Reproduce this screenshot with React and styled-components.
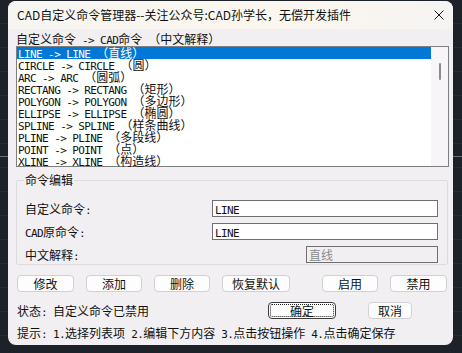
import styled, { createGlobalStyle } from "styled-components";

const GlobalStyle = createGlobalStyle`
  html, body {
    margin: 0;
    padding: 0;
    background: #1d2128;
  }
  body {
    font-family: "Noto Sans CJK SC", "Noto Sans", sans-serif;
    font-size: 12px;
    color: #111;
  }
`;

const Desktop = styled.div`
  width: 462px;
  height: 353px;
  padding: 1px 0 0 8px;
  box-sizing: border-box;
  overflow: hidden;
  background:
    linear-gradient(180deg, transparent 156px, #6b6f75 156px, #6b6f75 157px, transparent 157px),
    repeating-linear-gradient(180deg, transparent 0 23px, #262a31 23px 24px),
    #1d2128;
`;

const Dialog = styled.div`
  width: 445px;
  height: 344px;
  border-radius: 8px;
  background: #f2eff2;
  display: flex;
  flex-direction: column;
  overflow: hidden;
`;

const TitleBar = styled.div`
  height: 28px;
  display: flex;
  align-items: center;
  padding: 0 9px;
  background: linear-gradient(90deg, #f7f5f1 0%, #fbf7ee 60%, #f6f4f3 100%);
`;

const Title = styled.div`
  flex: 1;
  font-size: 12px;
  line-height: 28px;
  color: #111;
  white-space: nowrap;
`;

const CloseBtn = styled.div`
  width: 10px;
  height: 10px;
  display: flex;
`;

const Body = styled.div`
  flex: 1;
  display: flex;
  flex-direction: column;
  padding: 0 4px 0 8px;
`;

const Mono = styled.span`
  font-family: "DejaVu Sans Mono", "Liberation Mono", monospace;
  font-size: 11px;
  letter-spacing: -0.6px;
  white-space: pre;
`;

const Header = styled.div`
  height: 17px;
  padding-top: 3px;
  box-sizing: border-box;
  line-height: 14px;
  white-space: nowrap;
`;

const ListBox = styled.div`
  height: 121px;
  border: 1px solid #7f7f7f;
  background: #fff;
  box-sizing: border-box;
  display: flex;
`;

const Rows = styled.div`
  flex: 1;
  display: flex;
  flex-direction: column;
`;

const Row = styled.div`
  height: 12px;
  line-height: 12px;
  padding-left: 1px;
  white-space: nowrap;
  background: ${(p) => (p.$selected ? "#0078d7" : "transparent")};
  color: ${(p) => (p.$selected ? "#fff" : "#111")};
`;

const ScrollBar = styled.div`
  width: 17px;
  background: #f7f5f7;
  display: flex;
  justify-content: center;
  padding-top: 16px;
  box-sizing: border-box;
`;

const Thumb = styled.div`
  width: 2px;
  height: 17px;
  border-radius: 1px;
  background: #8a8a8a;
`;

const Group = styled.fieldset`
  margin: 6px 1px 0 0;
  padding: 13px 9px 1px 8px;
  border: 1px solid #dedbde;
  border-radius: 2px;
  display: flex;
  flex-direction: column;
  gap: 6px;
`;

const Legend = styled.legend`
  padding: 0 1px;
  margin-left: -1px;
  font-size: 12px;
  line-height: 14px;
`;

const Field = styled.div`
  height: 17px;
  display: flex;
  align-items: center;
`;

const Label = styled.div`
  flex: 1;
  white-space: nowrap;
`;

const Input = styled.div`
  width: ${(p) => p.$width}px;
  height: 17px;
  box-sizing: border-box;
  border: 1px solid #6f6f6f;
  background: ${(p) => (p.$disabled ? "transparent" : "#fff")};
  color: ${(p) => (p.$disabled ? "#8a8a8a" : "#111")};
  padding-left: 2px;
  line-height: 15px;
  white-space: nowrap;
`;

const ButtonRow = styled.div`
  margin-top: 10px;
  padding-left: 1px;
  display: flex;
  gap: 12px;
`;

const Button = styled.div`
  width: ${(p) => p.$width}px;
  height: 17px;
  box-sizing: border-box;
  border: 1px solid ${(p) => (p.$default ? "#3c3c3c" : "#d2d0d2")};
  border-radius: 4px;
  background: #fdfdfd;
  display: flex;
  align-items: center;
  justify-content: center;
  font-size: 12px;
  line-height: 15px;
  margin-left: ${(p) => p.$push || 0}px;
  position: relative;
`;

const FocusRing = styled.div`
  position: absolute;
  inset: 1px;
  border: 1px dotted #222;
  border-radius: 2px;
`;

const StatusRow = styled.div`
  margin-top: 10px;
  padding-left: 1px;
  height: 17px;
  display: flex;
  align-items: center;
`;

const Status = styled.div`
  width: 251px;
  white-space: nowrap;
`;

const Hint = styled.div`
  margin-top: 6px;
  padding-left: 1px;
  line-height: 16px;
  white-space: nowrap;
`;

const runs = (text) =>
  text
    .split(/([\x20-\x7e]+)/)
    .filter(Boolean)
    .map((part, i) =>
      /^[\x20-\x7e]+$/.test(part) ? <Mono key={i}>{part}</Mono> : <span key={i}>{part}</span>
    );

const commands = [
  ["LINE", "直线"],
  ["CIRCLE", "圆"],
  ["ARC", "圆弧"],
  ["RECTANG", "矩形"],
  ["POLYGON", "多边形"],
  ["ELLIPSE", "椭圆"],
  ["SPLINE", "样条曲线"],
  ["PLINE", "多段线"],
  ["POINT", "点"],
  ["XLINE", "构造线"],
];

export default function App() {
  return (
    <>
      <GlobalStyle />
      <Desktop>
        <Dialog>
          <TitleBar>
            <Title>CAD自定义命令管理器--关注公众号:CAD孙学长，无偿开发插件</Title>
            <CloseBtn>
              <svg width="10" height="10" viewBox="0 0 10 10">
                <path d="M0.5 0.5 L9.5 9.5 M9.5 0.5 L0.5 9.5" stroke="#1a1a1a" strokeWidth="1" />
              </svg>
            </CloseBtn>
          </TitleBar>
          <Body>
            <Header>{runs("自定义命令 -> CAD命令 （中文解释）")}</Header>
            <ListBox>
              <Rows>
                {commands.map(([cmd, zh], i) => (
                  <Row key={cmd} $selected={i === 0}>
                    {runs(`${cmd} -> ${cmd} （${zh}）`)}
                  </Row>
                ))}
              </Rows>
              <ScrollBar>
                <Thumb />
              </ScrollBar>
            </ListBox>
            <Group>
              <Legend>命令编辑</Legend>
              <Field>
                <Label>{runs("自定义命令: ")}</Label>
                <Input $width={226}>{runs("LINE")}</Input>
              </Field>
              <Field>
                <Label>{runs("CAD原命令: ")}</Label>
                <Input $width={226}>{runs("LINE")}</Input>
              </Field>
              <Field>
                <Label>{runs("中文解释: ")}</Label>
                <Input $width={132} $disabled>直线</Input>
              </Field>
            </Group>
            <ButtonRow>
              <Button $width={57}>修改</Button>
              <Button $width={56}>添加</Button>
              <Button $width={56}>删除</Button>
              <Button $width={68}>恢复默认</Button>
              <Button $width={56} $push={20}>启用</Button>
              <Button $width={57}>禁用</Button>
            </ButtonRow>
            <StatusRow>
              <Status>{runs("状态: 自定义命令已禁用")}</Status>
              <Button $width={68} $default>
                <FocusRing />
                确定
              </Button>
              <Button $width={44} $push={32}>取消</Button>
            </StatusRow>
            <Hint>{runs("提示: 1.选择列表项 2.编辑下方内容 3.点击按钮操作 4.点击确定保存")}</Hint>
          </Body>
        </Dialog>
      </Desktop>
    </>
  );
}
